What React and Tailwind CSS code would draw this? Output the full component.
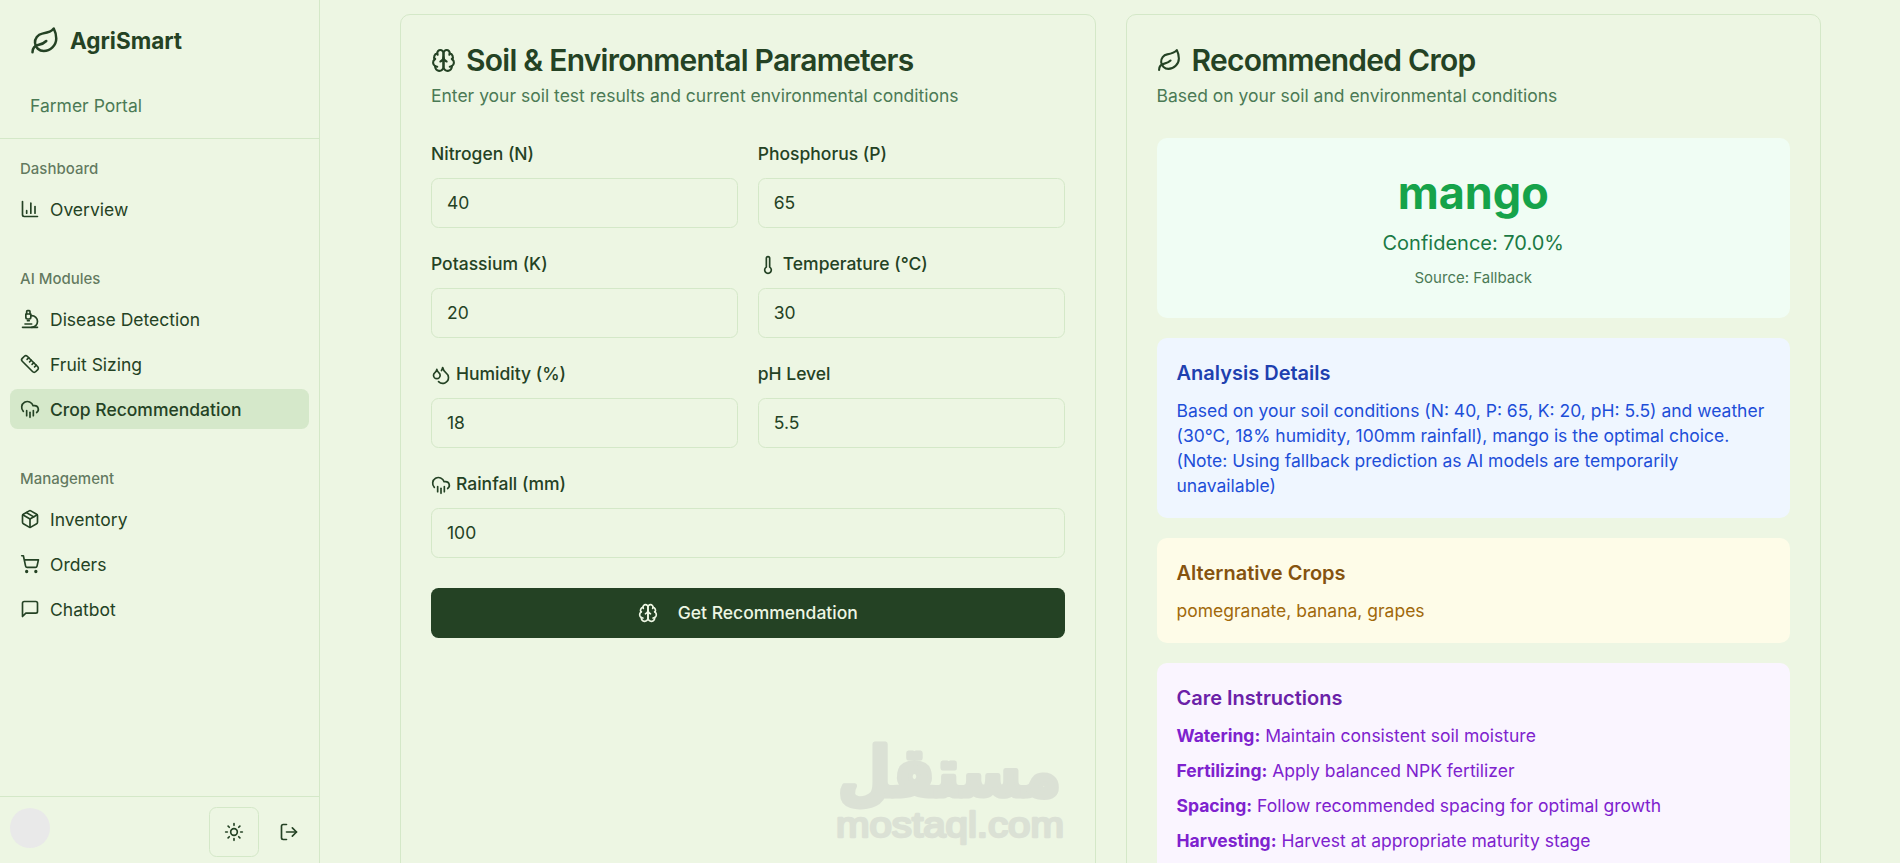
import React from 'react';
import {
  ChartColumn,
  CloudRain,
  Droplets,
  Leaf,
  LogOut,
  Microscope,
  Package,
  Ruler,
  ShoppingCart,
  Sun,
  Thermometer,
} from 'lucide-react';

const MessageIcon = ({ className }) => (
  <svg className={className} viewBox="0 0 24 24" fill="none" stroke="currentColor" strokeWidth="2" strokeLinecap="round" strokeLinejoin="round">
    <path d="M21 15a2 2 0 0 1-2 2H7l-4 4V5a2 2 0 0 1 2-2h14a2 2 0 0 1 2 2z" />
  </svg>
);

const BrainIcon = ({ className }) => (
  <svg className={className} viewBox="0 0 24 24" fill="none" stroke="currentColor" strokeWidth="2" strokeLinecap="round" strokeLinejoin="round">
    <path d="M12 5a3 3 0 1 0-5.997.125 4 4 0 0 0-2.526 5.77 4 4 0 0 0 .556 6.588A4 4 0 1 0 12 18Z" />
    <path d="M12 5a3 3 0 1 1 5.997.125 4 4 0 0 1 2.526 5.77 4 4 0 0 1-.556 6.588A4 4 0 1 1 12 18Z" />
    <path d="M15 13a4.5 4.5 0 0 1-3-4 4.5 4.5 0 0 1-3 4" />
    <path d="M17.599 6.5a3 3 0 0 0 .399-1.375" />
    <path d="M6.003 5.125A3 3 0 0 0 6.401 6.5" />
    <path d="M3.477 10.896a4 4 0 0 1 .585-.396" />
    <path d="M19.938 10.5a4 4 0 0 1 .585.396" />
    <path d="M6 18a4 4 0 0 1-1.967-.516" />
    <path d="M19.967 17.484A4 4 0 0 1 18 18" />
  </svg>
);

const navGroups = [
  {
    label: 'Dashboard',
    items: [{ title: 'Overview', icon: ChartColumn }],
  },
  {
    label: 'AI Modules',
    items: [
      { title: 'Disease Detection', icon: Microscope },
      { title: 'Fruit Sizing', icon: Ruler },
      { title: 'Crop Recommendation', icon: CloudRain, active: true },
    ],
  },
  {
    label: 'Management',
    items: [
      { title: 'Inventory', icon: Package },
      { title: 'Orders', icon: ShoppingCart },
      { title: 'Chatbot', icon: MessageIcon },
    ],
  },
];

const fields = [
  { label: 'Nitrogen (N)', value: '40' },
  { label: 'Phosphorus (P)', value: '65' },
  { label: 'Potassium (K)', value: '20' },
  { label: 'Temperature (°C)', value: '30', icon: Thermometer },
  { label: 'Humidity (%)', value: '18', icon: Droplets },
  { label: 'pH Level', value: '5.5' },
];

const care = [
  { label: 'Watering:', text: 'Maintain consistent soil moisture' },
  { label: 'Fertilizing:', text: 'Apply balanced NPK fertilizer' },
  { label: 'Spacing:', text: 'Follow recommended spacing for optimal growth' },
  { label: 'Harvesting:', text: 'Harvest at appropriate maturity stage' },
];

const Sidebar = () => {
  return (
    <aside className="flex flex-col shrink-0 w-80 border-r border-[#d4e8c8]">
      <div className="h-[139px] shrink-0 border-b border-[#d4e8c8] px-[30px] pt-[25px]">
        <div className="flex items-center gap-2.5">
          <Leaf className="w-[30px] h-[30px]" />
          <span className="text-[22.5px] leading-[31px] font-bold">AgriSmart</span>
        </div>
        <p className="mt-[37px] text-[17.5px] leading-[25px] text-[#4b7a55]">Farmer Portal</p>
      </div>

      <nav className="flex flex-col flex-1 gap-2.5">
        {navGroups.map((group) => (
          <div key={group.label} className="p-2.5">
            <div className="flex items-center h-10 px-2.5 text-[15px] font-medium text-[#244224]/70">
              {group.label}
            </div>
            <ul className="flex flex-col gap-[5px]">
              {group.items.map(({ title, icon: Icon, active }) => (
                <li
                  key={title}
                  className={`flex items-center gap-2.5 h-10 px-2.5 rounded-[7.5px] text-[17.5px] ${
                    active ? 'bg-[#d5e8ca] font-medium' : ''
                  }`}
                >
                  <Icon className="w-5 h-5" />
                  <span className="pt-0.5">{title}</span>
                </li>
              ))}
            </ul>
          </div>
        ))}
      </nav>

      <div className="flex items-start justify-between h-[67px] border-t border-[#d4e8c8] p-2.5">
        <div className="w-10 h-10 mt-px rounded-full bg-[#e9e9e9]" />
        <div className="flex items-center gap-2.5">
          <button className="flex items-center justify-center w-[50px] h-[50px] rounded-[7.5px] border border-[#d4e8c8]">
            <Sun className="w-5 h-5" />
          </button>
          <button className="flex items-center justify-center w-10 h-[50px]">
            <LogOut className="w-5 h-5" />
          </button>
        </div>
      </div>
    </aside>
  );
};

const CardHeader = ({ icon: Icon, title, description }) => (
  <div className="flex flex-col gap-[7.5px] mb-[30px]">
    <h3 className="flex items-center gap-2.5 text-[30px] leading-[30px] font-semibold tracking-tight">
      <Icon className="w-[25px] h-[25px]" />
      {title}
    </h3>
    <p className="text-[17.5px] leading-[25px] text-[#4b7a55]">{description}</p>
  </div>
);

const Field = ({ label, value, icon: Icon }) => (
  <div>
    <label className="block h-[31px] pt-px text-[17.5px] leading-[30px] font-medium whitespace-nowrap">
      {Icon && <Icon className="inline w-5 h-5 mr-[5px]" />}
      {label}
    </label>
    <input
      className="block w-full h-[50px] mt-[9px] px-[15px] rounded-[7.5px] border border-[#d4e8c8] text-[17.5px] outline-none"
      defaultValue={value}
    />
  </div>
);

const Watermark = () => (
  <svg
    className="absolute left-[826px] top-[724px] w-[248px] h-[136px] text-[#dbe1d5]"
    viewBox="0 0 248 136"
    fill="currentColor"
    stroke="currentColor"
    strokeLinejoin="round"
  >
    <text
      x="123.5"
      y="72"
      textAnchor="middle"
      direction="rtl"
      className="font-['DejaVu_Sans',sans-serif] font-bold text-[68px]"
      strokeWidth="5"
      textLength="223"
      lengthAdjust="spacingAndGlyphs"
    >
      مستقل
    </text>
    <text
      x="10"
      y="113"
      className="font-['Liberation_Sans',sans-serif] text-[35px]"
      strokeWidth="2.4"
      textLength="228"
      lengthAdjust="spacingAndGlyphs"
    >
      mostaql.com
    </text>
  </svg>
);

const App = () => {
  return (
    <div className="relative flex h-[863px] overflow-hidden bg-[#edf6e3] text-[#244224] font-['Inter',sans-serif]">
      <Sidebar />

      <main className="flex-1 pl-20 pt-3.5">
        <div className="grid grid-cols-2 gap-[30px] w-[1421px]">
          <section className="h-[900px] p-[30px] rounded-[10px] border border-[#d4e8c8]">
            <CardHeader
              icon={BrainIcon}
              title="Soil & Environmental Parameters"
              description="Enter your soil test results and current environmental conditions"
            />
            <div className="grid grid-cols-2 gap-5">
              {fields.map((field) => (
                <Field key={field.label} {...field} />
              ))}
              <div className="col-span-2">
                <Field label="Rainfall (mm)" value="100" icon={CloudRain} />
              </div>
            </div>
            <button className="flex items-center justify-center w-full h-[50px] mt-[30px] rounded-[7.5px] bg-[#244224] text-[#edf6e3] text-[17.5px] font-medium">
              <BrainIcon className="w-5 h-5 mr-5" />
              <span className="pt-0.5">Get Recommendation</span>
            </button>
          </section>

          <section className="h-[900px] p-[30px] rounded-[10px] border border-[#d4e8c8]">
            <CardHeader
              icon={Leaf}
              title="Recommended Crop"
              description="Based on your soil and environmental conditions"
            />
            <div className="flex flex-col gap-5">
              <div className="h-[180px] p-[30px] rounded-[10px] bg-[#f0fdf4] text-center">
                <div className="text-[45px] leading-[50px] font-bold text-[#16a34a]">mango</div>
                <div className="mt-2.5 text-[20px] leading-[30px] text-[#1b7a45]">Confidence: 70.0%</div>
                <div className="mt-2.5 text-[15px] leading-5 text-[#4b7a55]">Source: Fallback</div>
              </div>

              <div className="p-5 rounded-[10px] bg-[#eff6ff]">
                <h4 className="mb-2.5 text-[20px] leading-[30px] font-semibold text-[#1e40af]">Analysis Details</h4>
                <p className="text-[17.5px] leading-[25px] text-[#1d4ed8]">
                  Based on your soil conditions (N: 40, P: 65, K: 20, pH: 5.5) and weather (30°C, 18% humidity, 100mm
                  rainfall), mango is the optimal choice. (Note: Using fallback prediction as AI models are temporarily
                  unavailable)
                </p>
              </div>

              <div className="p-5 rounded-[10px] bg-[#fefce8]">
                <h4 className="mb-2.5 text-[20px] leading-[30px] font-semibold text-[#85530f]">Alternative Crops</h4>
                <p className="text-[17.5px] leading-[25px] text-[#a1690b]">pomegranate, banana, grapes</p>
              </div>

              <div className="h-[240px] p-5 rounded-[10px] bg-[#faf5ff]">
                <h4 className="mb-2.5 text-[20px] leading-[30px] font-semibold text-[#6b21a8]">Care Instructions</h4>
                <div className="flex flex-col gap-2.5 text-[17.5px] leading-[25px] text-[#7e22ce]">
                  {care.map((item) => (
                    <p key={item.label}>
                      <strong className="font-bold">{item.label}</strong> {item.text}
                    </p>
                  ))}
                </div>
              </div>
            </div>
          </section>
        </div>
      </main>

      <Watermark />
    </div>
  );
};

export default App;
